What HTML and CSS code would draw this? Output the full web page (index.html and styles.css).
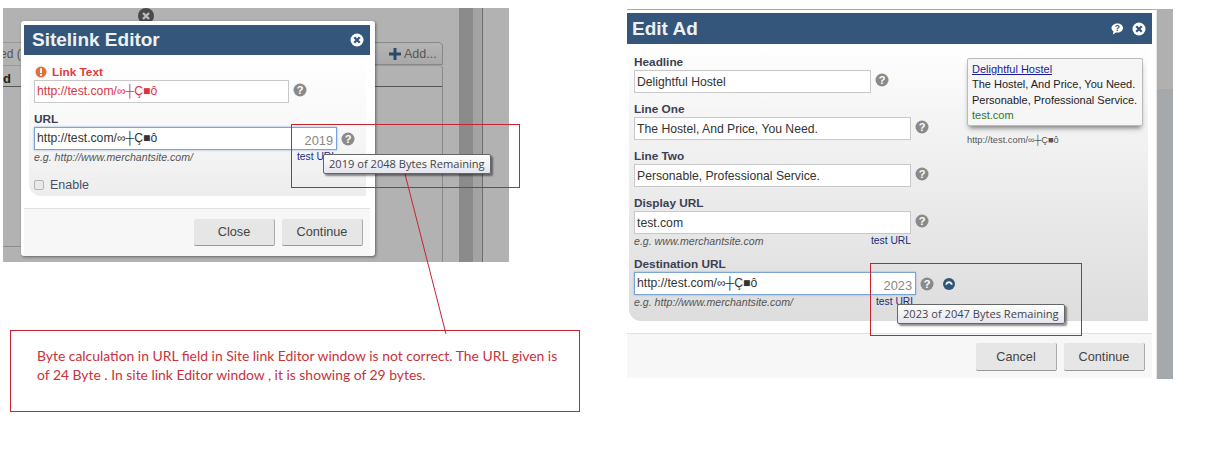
FILE: index.html
```html
<!DOCTYPE html>
<html lang="en">
<head>
<meta charset="utf-8">
<title>Sitelink Editor bug report</title>
<link rel="stylesheet" href="styles.css">
</head>
<body>
<main class="canvas">
  <section class="shot shot-left">
    <div class="back-text back-text-a">ed (</div>
    <div class="back-text back-text-b">d</div>
    <div class="back-rule back-rule-a"></div>
    <div class="back-rule back-rule-b"></div>
    <div class="back-rule back-rule-c"></div>
    <div class="add-tab"><svg class="add-plus" viewBox="0 0 12 12"><path d="M4.500 0h3v4.500H12v3H7.500V12h-3V7.500H0v-3h4.500z" fill="#2e4a68"/></svg>Add...</div>
    <div class="add-panel"></div>
    <div class="strip"></div>
    <div class="strip-line"></div>
    <div class="back-close"><svg viewBox="0 0 16 16" width="16" height="16"><use href="#x-circle"/></svg></div>
    <div class="dialog dialog-left">
      <header class="titlebar">
        <h2>Sitelink Editor</h2>
        <span class="title-icons"><svg class="ti" viewBox="0 0 16 16"><use href="#x-circle-white"/></svg></span>
      </header>
      <div class="panel panel-left">
        <div class="label label-error"><svg class="warn" viewBox="0 0 12 12"><circle cx="6" cy="6" r="5.500" fill="#e2703f"/><rect x="5" y="2.400" width="2" height="4.600" fill="#fff"/><rect x="5" y="8" width="2" height="1.800" fill="#fff"/></svg>Link Text</div>
        <div class="row">
          <div class="input input-error w-255">http://test.com/∞┼Ç■ô</div>
          <svg class="help" viewBox="0 0 14 14"><use href="#help"/></svg>
        </div>
        <div class="label label-gap">URL</div>
        <div class="row">
          <div class="input input-focus w-303">http://test.com/∞┼Ç■ô<span class="count">2019</span></div>
          <svg class="help" viewBox="0 0 14 14"><use href="#help"/></svg>
        </div>
        <div class="hint-row w-303"><span class="hint">e.g. http://www.merchantsite.com/</span><a class="test-url">test URL</a></div>
        <div class="check-row"><span class="check"></span>Enable</div>
      </div>
      <footer class="foot foot-left">
        <button class="btn">Close</button>
        <button class="btn">Continue</button>
      </footer>
    </div>
  </section>

  <section class="shot shot-right">
    <div class="side-a"></div>
    <div class="side-b"></div>
    <div class="dialog dialog-right">
      <header class="titlebar titlebar-right">
        <h2>Edit Ad</h2>
        <span class="title-icons">
          <svg class="ti" viewBox="0 0 16 16"><path d="M8.500 2.500c3 0 5.500 1.800 5.500 4.500s-2.400 4.500-5.500 4.500c-.5 0-1 0-1.500-.1L3.800 13.500l.7-3C3.400 9.700 2.500 8.500 2.500 7c0-2.700 3-4.500 6-4.500z" fill="#fff"/><text x="8.300" y="10.300" text-anchor="middle" class="ti-q">?</text></svg>
          <svg class="ti" viewBox="0 0 16 16"><use href="#x-circle-white"/></svg>
        </span>
      </header>
      <div class="panel panel-right">
        <div class="fields">
          <div class="label">Headline</div>
          <div class="row"><div class="input w-237">Delightful Hostel</div><svg class="help" viewBox="0 0 14 14"><use href="#help"/></svg></div>
          <div class="label label-gap">Line One</div>
          <div class="row"><div class="input w-277">The Hostel, And Price, You Need.</div><svg class="help" viewBox="0 0 14 14"><use href="#help"/></svg></div>
          <div class="label label-gap">Line Two</div>
          <div class="row"><div class="input w-277">Personable, Professional Service.</div><svg class="help" viewBox="0 0 14 14"><use href="#help"/></svg></div>
          <div class="label label-gap">Display URL</div>
          <div class="row"><div class="input w-277">test.com</div><svg class="help" viewBox="0 0 14 14"><use href="#help"/></svg></div>
          <div class="hint-row w-277"><span class="hint">e.g. www.merchantsite.com</span><a class="test-url">test URL</a></div>
          <div class="label label-gap-sm">Destination URL</div>
          <div class="row"><div class="input input-focus w-282">http://test.com/∞┼Ç■ô<span class="count">2023</span></div><svg class="help" viewBox="0 0 14 14"><use href="#help"/></svg><svg class="undo" viewBox="0 0 12 12"><circle cx="6" cy="6" r="6" fill="#2f5578"/><path d="M2.300 6.800C2.600 4.500 4.200 3.300 6 3.300s3.400 1.200 3.700 3.500H8C7.800 5.800 7 5.200 6 5.200S4.200 5.800 4 6.800z" fill="#fff"/></svg></div>
          <div class="hint-row w-282"><span class="hint">e.g. http://www.merchantsite.com/</span><a class="test-url">test URL</a></div>
        </div>
        <aside class="preview-col">
          <div class="preview">
            <a class="p-title">Delightful Hostel</a>
            <div>The Hostel, And Price, You Need.</div>
            <div>Personable, Professional Service.</div>
            <div class="p-url">test.com</div>
          </div>
          <div class="p-dest">http://test.com/∞┼Ç■ô</div>
        </aside>
      </div>
      <footer class="foot foot-right">
        <button class="btn">Cancel</button>
        <button class="btn">Continue</button>
      </footer>
    </div>
  </section>

  <div class="callout callout-a"></div>
  <div class="callout callout-b"></div>
  <div class="callout callout-note"><p>Byte calculation in URL field in Site link Editor window is not correct. The URL given is<br>of 24 Byte . In site link Editor window , it is showing of 29 bytes.</p></div>
  <svg class="leader" width="60" height="170" viewBox="0 0 60 170"><line x1="6" y1="0" x2="47" y2="160" stroke="#c8232f" stroke-width="1"/></svg>
  <div class="tip tip-a">2019 of 2048 Bytes Remaining</div>
  <div class="tip tip-b">2023 of 2047 Bytes Remaining</div>
</main>

<svg class="defs" width="0" height="0">
  <defs>
    <g id="help"><circle cx="7" cy="7" r="6.500" fill="#8a8a8a"/><text x="7" y="10.800" text-anchor="middle" class="help-q">?</text></g>
    <g id="x-circle-white"><circle cx="8" cy="8" r="6.500" fill="#fff"/><path d="M5.300 5.300l5.400 5.400M10.700 5.300l-5.400 5.400" stroke="#33567a" stroke-width="2.300"/></g>
    <g id="x-circle"><circle cx="8" cy="8" r="8" fill="#4a4a4a"/><path d="M5 5l6 6M11 5l-6 6" stroke="#bcbcbc" stroke-width="2.400"/></g>
  </defs>
</svg>
</body>
</html>
```
FILE: styles.css
```css
* { box-sizing: border-box; }
html, body { margin: 0; padding: 0; background: #fff; }
body { font-family: "Liberation Sans", Arial, "DejaVu Sans", sans-serif; color: #333; overflow: hidden; }
.canvas { position: relative; width: 1208px; height: 454px; overflow: hidden; }
.defs { position: absolute; }
.help-q { font: bold 11px "Liberation Sans", sans-serif; fill: #fff; }
.ti-q { font: bold 8.500px "Liberation Sans", sans-serif; fill: #33567a; }

/* backdrops */
.shot { position: absolute; background: #b2b2b2; }
.shot-left { left: 3px; top: 8px; width: 506px; height: 254px; }
.shot-right { left: 627px; top: 9px; width: 546px; height: 370px; background: #fff; }
.back-text { position: absolute; left: 0; font-size: 12px; color: #555; }
.back-text-a { top: 39px; width: 18px; overflow: hidden; white-space: nowrap; text-indent: -3px; }
.back-text-b { top: 63px; font-weight: bold; font-size: 13px; color: #222; }
.back-rule { position: absolute; left: 0; width: 18px; height: 1px; background: #888; }
.back-rule-a { top: 34px; background: #999; }
.back-rule-b { top: 57px; background: #999; }
.back-rule-c { top: 78px; background: #555; }
.shot-left::after { content: ""; position: absolute; left: 0; top: 238px; width: 18px; height: 1px; background: #8c8c8c; }
.add-tab { position: absolute; left: 372px; top: 34px; width: 68px; height: 23px; padding-left: 14px; border: 1px solid #888; border-left: 0; border-radius: 0 5px 0 0; font-size: 12.500px; color: #555; white-space: nowrap; background: linear-gradient(#b4b4b4, #a9a9a9); display: flex; align-items: center; gap: 3px; }
.add-plus { width: 12px; height: 12px; flex: none; }
.add-panel { position: absolute; left: 372px; top: 57px; width: 68px; height: 197px; border-right: 1px solid #888; border-top: 1px solid #999; border-radius: 0 4px 0 0; background: linear-gradient(#b2b2b2 20px, #555 20px, #555 21px, #b2b2b2 21px); }
.strip { position: absolute; left: 456px; top: 0; width: 14px; height: 254px; background: #8b8b8b; }
.strip::after { content: ""; position: absolute; left: 14px; top: 0; width: 9px; height: 254px; background: #a3a3a3; }
.strip-line { position: absolute; left: 479px; top: 0; width: 1px; height: 254px; background: #6e6e6e; }
.back-close { position: absolute; left: 135px; top: 0; width: 16px; height: 16px; }
.side-a { position: absolute; left: 529px; top: 0; width: 17px; height: 80px; background: #b0b0b0; }
.side-b { position: absolute; left: 529px; top: 80px; width: 17px; height: 290px; background: #a6a9ac; }

/* dialogs */
.dialog { position: absolute; background: #fff; display: flex; flex-direction: column; }
.dialog-left { left: 18px; top: 13px; width: 354px; height: 235px; padding: 4px 5px 0 3px; border-radius: 3px; box-shadow: 1px 1px 3px rgba(0,0,0,.45); }
.dialog-right { left: 0; top: 0; width: 530px; height: 370px; padding: 3px 4px 1px 0; border-top: 1px solid #aaa; border-right: 1px solid #e4e4e4; }
.titlebar { height: 30px; flex: none; background: #33567a; display: flex; align-items: center; justify-content: space-between; padding: 0 5px 0 8px; }
.titlebar-right { height: 31px; padding: 0 5px 0 5px; }
.titlebar h2 { margin: 0; font-size: 19px; font-weight: bold; color: #eef1f4; }
.title-icons { display: flex; gap: 6px; align-items: center; }
.ti { width: 16px; height: 16px; display: block; }

.panel { flex: none; border-radius: 0 0 0 12px; }
.panel-left { margin: 0 4px 0 5px; height: 141px; padding: 11px 0 0 5px; background: linear-gradient(#fff 0, #f8f8f8 50%, #ededed 100%); }
.panel-right { height: 277px; margin: 0 4px 0 2px; padding: 12px 0 0 5px; display: flex; background: linear-gradient(#fff 0, #f3f3f3 30%, #dddddd 100%); }
.fields { width: 333px; flex: none; }
.label { height: 12px; font-size: 11.800px; font-weight: bold; color: #3a3f55; line-height: 12px; margin-bottom: 2px; display: flex; align-items: center; gap: 5px; }
.label-error { color: #e23b3b; margin-left: 1px; }
.warn { width: 12px; height: 12px; }
.label-gap { margin-top: 10px; }
.label-gap-sm { margin-top: 11px; }
.row { display: flex; align-items: center; gap: 4px; height: 23px; }
.input { position: relative; height: 23px; background: #fff; border: 1px solid #c8c8c8; font-size: 12.200px; line-height: 21px; color: #333; padding-left: 2px; white-space: nowrap; flex: none; }
.fields .input { line-height: 23px; }
.fields .input-focus { line-height: 20px; }
.input-error { color: #d9343f; line-height: 20px; }
.input-focus { border: 1px solid #7aa3d6; box-shadow: 0 0 2px #8fb2dc; }
.w-255 { width: 255px; }
.w-303 { width: 303px; }
.w-237 { width: 237px; }
.w-277 { width: 277px; }
.w-282 { width: 282px; }
.count { position: absolute; right: 3px; top: 2px; font-size: 12.800px; line-height: 21px; color: #888; }
.help { width: 14px; height: 14px; margin-top: -3px; flex: none; }
.input-focus + .help { margin-top: 0; }
.undo { width: 12px; height: 12px; margin-left: 5px; flex: none; }
.hint-row { display: flex; justify-content: space-between; height: 13px; align-items: center; }
.hint { font-size: 10.600px; font-style: italic; color: #555; }
.test-url { font-size: 10.300px; color: #1a2a80; }
.check-row { display: flex; align-items: center; gap: 6px; height: 14px; font-size: 12.500px; color: #4a5068; margin-top: 15px; }
.check { width: 10px; height: 10px; border: 1px solid #b5b5b5; border-radius: 2px; background: #e9e9e9; }

.foot { flex: 1; display: flex; justify-content: flex-end; gap: 7px; background: #f7f7f7; border-top: 1px solid #e2e2e2; }
.foot-left { margin-top: 12px; padding: 10px 7px 0 0; }
.foot-left .btn { height: 27px; }
.foot-right { margin-top: 12px; padding: 9px 7px 0 0; }
.btn { width: 81px; height: 28px; border: 0; border-right: 1px solid #aaa; border-bottom: 1px solid #999; border-radius: 2px; background: #e6e6e6; font: 12.700px "Liberation Sans", Arial, sans-serif; color: #444; padding: 0; }

/* ad preview */
.preview-col { padding-top: 2px; }
.preview { width: 176px; height: 68px; border: 1px solid #bbb; border-radius: 2px; background: #f6f6f6; box-shadow: 0 4px 5px -2px rgba(0,0,0,.5); padding: 3px 0 0 4px; font-size: 11px; line-height: 15.300px; color: #222; white-space: nowrap; }
.p-title { color: #1a1a9c; text-decoration: underline; display: block; }
.p-url { color: #2a7a2a; }
.p-dest { font-size: 9.300px; color: #555; margin-top: 9px; }

/* annotations */
.callout { position: absolute; border: 1px solid #c8232f; }
.callout-a { left: 291px; top: 124px; width: 229px; height: 64px; }
.callout-b { left: 870px; top: 263px; width: 212px; height: 73px; }
.callout-note { left: 10px; top: 330px; width: 570px; height: 82px; padding: 15px 0 0 26px; }
.callout-note p { margin: 0; font: 13.900px/19px Lato, "Open Sans", sans-serif; color: #c8323c; white-space: nowrap; }
.leader { position: absolute; left: 399px; top: 174px; }
.tip { position: absolute; height: 20px; width: 168px; border: 1px solid #666; border-radius: 2px; background: linear-gradient(#fff, #e4e5ee); box-shadow: 2px 2px 2px rgba(0,0,0,.45); font: 11.100px/18px "Open Sans", "Liberation Sans", sans-serif; color: #444; padding-left: 5px; white-space: nowrap; }
.tip-a { left: 323px; top: 154px; }
.tip-b { left: 897px; top: 304px; }
```
